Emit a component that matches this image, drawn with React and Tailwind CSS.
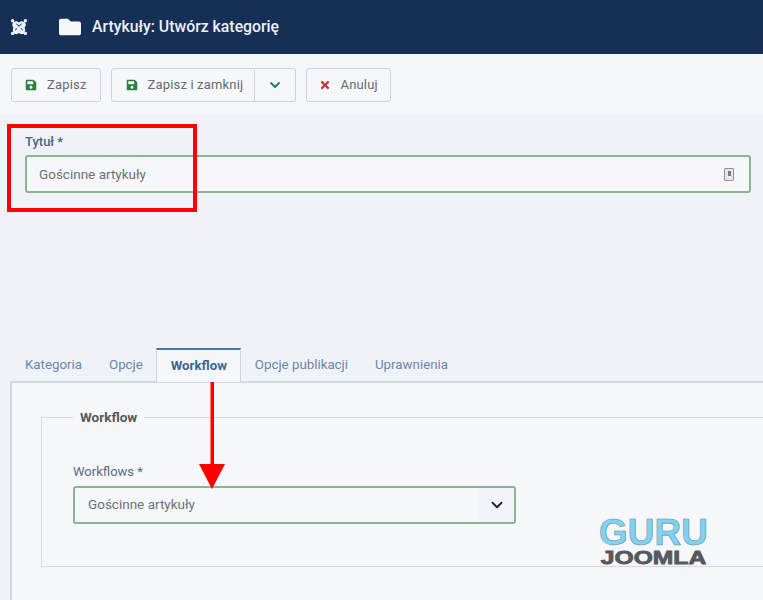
import { ChevronDown } from 'lucide-react';
import { FaFolder, FaSave, FaTimes } from 'react-icons/fa';

function JoomlaLogo() {
  return (
    <svg width="20" height="20" viewBox="0 0 20 20" fill="none" stroke="#f0f3f8" strokeWidth="2.4" strokeLinecap="round">
      <path d="M5 6.5 L10 11.5 L14 15.5" />
      <path d="M15 6.5 L10 11.5 L6 15.5" />
      <path d="M5 6.5 C6.5 4.5 8.5 5.5 10 7 C11.5 5.5 13.5 4.5 15 6.5" />
      <path d="M6 15.5 C7.5 17 9 15.5 10 14.5 C11 15.5 12.5 17 14 15.5" />
      <path d="M5 6.5 C3.5 8.5 5 9.5 6.5 10.5 C5 11.5 4 13.5 6 15.5" />
      <path d="M15 6.5 C16.5 8.5 15 9.5 13.5 10.5 C15 11.5 16 13.5 14 15.5" />
      <circle cx="3.6" cy="3.8" r="1.7" fill="#f0f3f8" stroke="none" />
      <circle cx="16.4" cy="3.8" r="1.7" fill="#f0f3f8" stroke="none" />
      <circle cx="3.6" cy="16.4" r="1.7" fill="#f0f3f8" stroke="none" />
      <circle cx="16.4" cy="16.4" r="1.7" fill="#f0f3f8" stroke="none" />
    </svg>
  );
}

function ToolbarButton({ icon, label, className = '' }) {
  return (
    <button className={`flex h-[34px] items-center gap-[10px] border border-[#ccd3dc] text-[13px] tracking-[0.17px] text-[#646a72] ${className}`}>
      {icon}
      <span>{label}</span>
    </button>
  );
}

const saveIcon = <FaSave className="size-[12px] text-[#2f7d3c]" />;

function TabItem({ label, active }) {
  if (active) {
    return (
      <div className="z-10 -mb-px flex h-[34px] w-[85px] items-center justify-center border-x border-t-2 border-x-[#ccd3dc] border-t-[#4d72a6] bg-[#f5f7fb] font-bold text-[#3f6595]">
        {label}
      </div>
    );
  }
  return <div className="flex h-[33px] items-center px-[13.5px] text-[#6b86aa]">{label}</div>;
}

export default function App() {
  return (
    <div className="relative h-[600px] w-[763px] overflow-hidden bg-[#eff2f7] font-['Roboto',sans-serif]">
      <header className="flex h-[54px] items-center bg-[#152f57] pl-[9px] text-white">
        <JoomlaLogo />
        <FaFolder className="ml-[30px] size-[22px] text-[#f5f7fb]" />
        <h1 className="ml-[11px] text-[15.8px] font-medium text-[#eef1f6]">Artykuły: Utwórz kategorię</h1>
      </header>

      <div className="flex h-[61px] items-center gap-[10px] bg-[#f5f7fb] pl-[11px]">
        <ToolbarButton icon={saveIcon} label="Zapisz" className="w-[90px] rounded-[3px] pl-[13px]" />
        <div className="flex">
          <ToolbarButton icon={saveIcon} label="Zapisz i zamknij" className="w-[144px] rounded-l-[3px] pl-[13.5px]" />
          <button className="flex h-[34px] w-[41px] items-center justify-center rounded-r-[3px] border border-l-0 border-[#ccd3dc]">
            <ChevronDown className="size-[16px] text-[#2f7d5c]" strokeWidth={3} />
          </button>
        </div>
        <ToolbarButton
          icon={<FaTimes className="size-[12px] text-[#cf2e2e]" />}
          label="Anuluj"
          className="w-[85px] rounded-[3px] pl-[11.5px]"
        />
      </div>

      <div className="pl-[10px]">
        <div className="pt-[18px] pl-[15px]">
          <label className="block text-[13px] leading-[17px] font-medium text-[#4f6480]">Tytuł *</label>
          <div className="mt-[5px] flex h-[38px] w-[726px] items-center justify-between rounded-[3px] border-2 border-[#8ab591] bg-[#f5f7fb] pr-[15px] pl-[12px] text-[13.5px] text-[#6c7177]">
            <span>Gościnne artykuły</span>
            <div className="flex h-[13px] w-[10px] items-start justify-center rounded-[1px] border border-[#8d8f92] bg-[#e6e7e9] pt-[2px]">
              <div className="h-[5px] w-[3px] bg-[#77797c]" />
            </div>
          </div>
        </div>

        <div className="mt-[155px] flex pl-[1.5px] text-[13.3px]">
          <TabItem label="Kategoria" />
          <TabItem label="Opcje" />
          <TabItem label="Workflow" active />
          <TabItem label="Opcje publikacji" />
          <TabItem label="Uprawnienia" />
        </div>

        <section className="h-[220px] w-[760px] border-t-2 border-l-2 border-[#d3d9e1] bg-[#f5f7fb] pt-[28px] pl-[29px]">
          <fieldset className="h-[156px] border border-r-0 border-[#d3d9e1] pl-[31px]">
            <legend className="px-[7px] text-[13.5px] leading-[1] font-bold text-[#55595f]">Workflow</legend>
            <label className="mt-[38px] block text-[13px] leading-[17px] text-[#5a6b80]">Workflows *</label>
            <div className="mt-[6px] flex h-[38px] w-[443px] items-center justify-between overflow-hidden rounded-[3px] border-2 border-[#8ab591] pl-[13px] text-[13.5px] text-[#6c7177]">
              <span>Gościnne artykuły</span>
              <div className="flex h-full w-[35px] items-center justify-center bg-[#f0f3f8]">
                <ChevronDown className="size-[18px] text-[#23262d]" strokeWidth={2.6} />
              </div>
            </div>
          </fieldset>
        </section>
      </div>

      {/* annotations painted over the screenshot */}
      <div className="absolute top-[124px] left-[7px] h-[88px] w-[190px] border-[4px] border-[#ff0000]" />
      <svg className="absolute top-[382px] left-[196px]" width="32" height="108" viewBox="0 0 32 108">
        <path d="M14.5 0 H18 V82 H14.5 Z" fill="#ff0000" />
        <path d="M3 82 H29 L16 107 Z" fill="#ff0000" />
      </svg>

      <div className="absolute top-[516px] left-[599px] flex w-[109px] flex-col items-center font-['Liberation_Sans',sans-serif] font-bold">
        <span className="text-[37px] leading-[34px] text-[#7fd3f0] [-webkit-text-stroke:0.6px_#6b8fa3]">GURU</span>
        <span className="origin-center scale-x-[1.37] text-[18px] leading-[17px] font-bold text-[#57585a] [-webkit-text-stroke:0.8px_#57585a]">JOOMLA</span>
      </div>
    </div>
  );
}
